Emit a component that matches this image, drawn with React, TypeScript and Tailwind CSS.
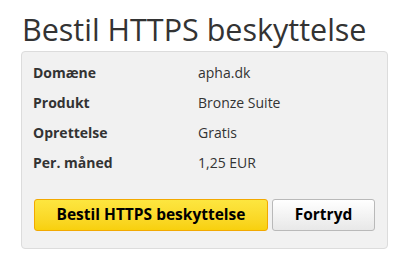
const rows: [string, string][] = [
  ["Domæne", "apha.dk"],
  ["Produkt", "Bronze Suite"],
  ["Oprettelse", "Gratis"],
  ["Per. måned", "1,25 EUR"],
];

export default function App() {
  return (
    <div className="w-[400px] h-[264px] bg-white px-[21px] pt-[9px] font-['Open_Sans',sans-serif] text-[#333]">
      <h1 className="text-[30.5px] leading-[40px] ml-[1px]">Bestil HTTPS beskyttelse</h1>
      <div className="mt-[2px] w-[367px] rounded-[4px] border border-[#dcdcdc] bg-[#f1f1f1] px-[11px] pt-[5px] pb-[17px]">
        <div className="flex flex-col">
          {rows.map(([label, value]) => (
            <div key={label} className="flex h-[30px] items-center text-[14px]">
              <span className="w-[165px] font-bold">{label}</span>
              <span>{value}</span>
            </div>
          ))}
        </div>
        <div className="mt-[22px] flex gap-[4px] pl-[1px]">
          <button className="h-[32px] w-[234px] rounded-[3px] border border-[#f2a900] bg-gradient-to-b from-[#fde63f] to-[#f8d00c] text-[15.5px] font-bold text-black">
            Bestil HTTPS beskyttelse
          </button>
          <button className="h-[32px] w-[103px] rounded-[3px] border border-[#b9b9b9] bg-gradient-to-b from-white to-[#e8e8e8] text-[15.5px] font-bold text-black">
            Fortryd
          </button>
        </div>
      </div>
    </div>
  );
}
